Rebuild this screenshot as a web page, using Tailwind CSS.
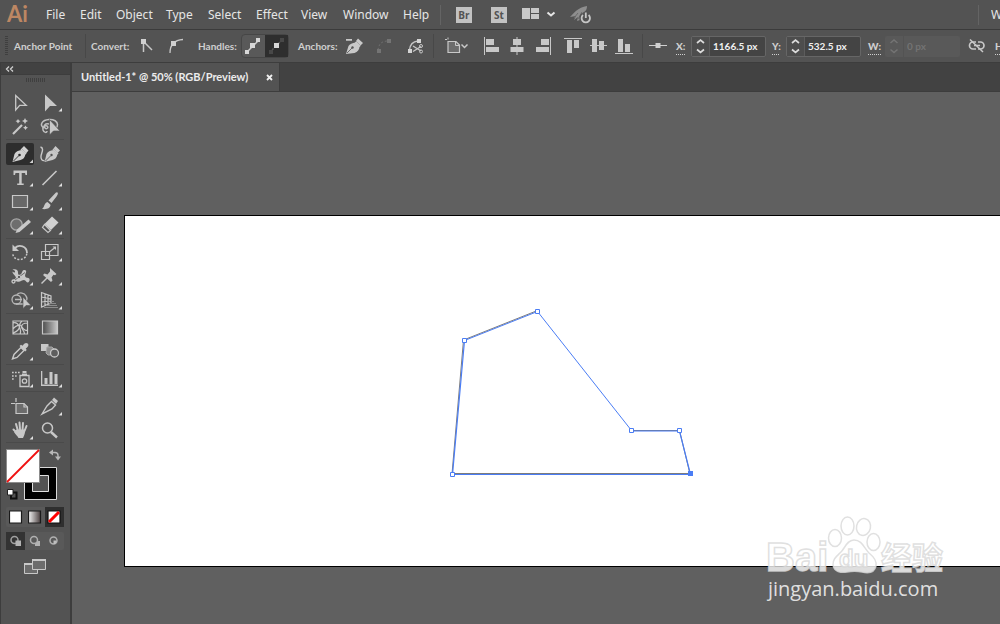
<!DOCTYPE html>
<html lang="en">
<head>
  <meta charset="UTF-8">
  <meta name="viewport" content="width=device-width, initial-scale=1.0">
  <title>Untitled-1* @ 50% (RGB/Preview)</title>
  <script src="https://cdn.jsdelivr.net/npm/@tailwindcss/browser@4"></script>
</head>
<body class="flex h-screen flex-col overflow-hidden bg-[#606060] font-['Open_Sans','Noto_Sans',sans-serif] text-[#dcdcdc]">

  <!-- Menu bar -->
  <header class="flex h-[30px] shrink-0 items-center overflow-hidden border-b border-[#3b3b3b] bg-[#535353] whitespace-nowrap">
    <h1 class="w-[46px] shrink-0 pb-0.5 pl-[7px] font-['Lato',sans-serif] text-[22px] leading-6 font-bold text-[#bd8763]">Ai</h1>
    <nav class="flex shrink-0 font-['Noto_Sans',sans-serif] text-xs text-[#e6e6e6]">
      <button class="w-[34px] text-left">File</button>
      <button class="w-9 text-left">Edit</button>
      <button class="w-[50px] text-left">Object</button>
      <button class="w-[42px] text-left">Type</button>
      <button class="w-12 text-left">Select</button>
      <button class="w-[45px] text-left">Effect</button>
      <button class="w-[42px] text-left">View</button>
      <button class="w-[60px] text-left">Window</button>
      <button class="w-[37px] text-left">Help</button>
    </nav>
    <div class="h-5 w-px shrink-0 bg-[#646464]"></div>
    <button class="ml-[15px] h-4 w-4 shrink-0 bg-[#c2c2c2] text-center text-[10px] leading-4 font-bold text-[#535353]">Br</button>
    <button class="ml-[19px] h-4 w-4 shrink-0 bg-[#c2c2c2] text-center text-[10px] leading-4 font-bold text-[#535353]">St</button>
    <button class="ml-[15px] shrink-0" aria-label="Arrange documents">
      <svg width="34" height="14" viewBox="0 0 34 14"><path d="M0 0h8v11H0zM9 0h8v5H9zM9 6h8v5H9z" fill="#c8c8c8"/><path d="M25.500 4.500l3.500 3 3.500-3" fill="none" stroke="#e6e6e6" stroke-width="2"/></svg>
    </button>
    <button class="ml-[14px] shrink-0" aria-label="GPU performance">
      <svg width="24" height="20" viewBox="0 0 24 20"><path d="M0 12C3 9 8 2 17 1c0 3-1 5-3 6-3 2-3 4-4 8l-3 1 1-4-4 3 2-4z" fill="#8e8e8e"/><path d="M8 8l-4 5M12 7l-4 7" stroke="#6a6a6a"/><path d="M13 9.500a4.500 4.500 0 1 0 5.500 0M15.800 7v6" fill="none" stroke="#535353" stroke-width="4"/><path d="M13 10a4.200 4.200 0 1 0 5.600 0M15.800 7.500v5.500" fill="none" stroke="#c6c6c6" stroke-width="1.800"/></svg>
    </button>
    <div class="ml-auto h-5 w-px shrink-0 bg-[#646464]"></div>
    <span class="ml-3 w-[9px] shrink-0 overflow-hidden font-['Noto_Sans',sans-serif] text-xs text-[#e6e6e6]">W</span>
  </header>

  <!-- Control bar -->
  <section class="flex h-8 shrink-0 items-center overflow-hidden bg-[#535353] font-['Lato',sans-serif] text-[10px] font-bold whitespace-nowrap text-[#cfcfcf]">
    <div class="ml-[5px] h-5 w-[3px] shrink-0 bg-[repeating-linear-gradient(#3f3f3f_0_1px,#535353_1px_2px)]"></div>
    <span class="ml-1.5 w-[71px] shrink-0">Anchor Point</span>
    <div class="h-6 w-px shrink-0 bg-[#484848]"></div>
    <span class="ml-[5px] w-[45px] shrink-0">Convert:</span>
    <button class="w-[22px] shrink-0" aria-label="Convert to corner">
      <svg width="22" height="20" viewBox="0 0 22 20" fill="none" stroke="#c8c8c8"><path d="M7.500 5v11M8 6l8 8" stroke-width="1.500"/><path d="M5 3h5v5H5z" fill="#d0d0d0" stroke="none"/></svg>
    </button>
    <button class="ml-2 w-[22px] shrink-0" aria-label="Convert to smooth">
      <svg width="22" height="20" viewBox="0 0 22 20" fill="none" stroke="#c8c8c8"><path d="M4 17C4 8 9 4 17 3.500" stroke-width="1.300"/><path d="M5 5h5v5H5z" fill="#d0d0d0" stroke="none"/></svg>
    </button>
    <span class="ml-2.5 w-[43px] shrink-0">Handles:</span>
    <div class="flex h-6 w-12 shrink-0 rounded-sm border border-[#464646] bg-[#595959]">
      <button class="w-[23px]" aria-label="Show handles">
        <svg width="23" height="22" viewBox="0 0 23 22"><path d="M5 17L17 5" stroke="#cfcfcf" stroke-width="1.500"/><path d="M3 15h4v4H3zM14 3h4v4h-4zM8 8h5v5H8z" fill="#d8d8d8"/></svg>
      </button>
      <button class="w-[23px] bg-[#2e2e2e]" aria-label="Hide handles">
        <svg width="23" height="22" viewBox="0 0 23 22"><path d="M5 17L17 5" stroke="#585858" stroke-width="1.500" stroke-dasharray="2 1"/><path d="M4 15h4v4H4zM15 3h4v4h-4z" fill="#484848"/><path d="M9 8h5v5H9z" fill="#d8d8d8"/></svg>
      </button>
    </div>
    <span class="ml-[9px] w-11 shrink-0">Anchors:</span>
    <button class="w-6 shrink-0" aria-label="Remove anchor">
      <svg width="24" height="20" viewBox="0 0 24 20"><path d="M4 18l2.500-8c1-2 4-3 7-3.500l4 4c0 3-2 5.500-5 6.500zM14 5l2-2.500 5 4.500-2.500 2.500zM4 3h6v1.700H4z" fill="#c8c8c8"/><path d="M13.500 6l4.500 4.500" stroke="#c8c8c8" stroke-width="2"/><path d="M5 17l5-5" stroke="#535353" stroke-width=".800"/><circle cx="10.500" cy="11.500" r="1.200" fill="#535353"/></svg>
    </button>
    <button class="ml-1.5 w-6 shrink-0" aria-label="Connect endpoints">
      <svg width="24" height="20" viewBox="0 0 24 20"><path d="M6 14C7 8 9 5.500 15 5" fill="none" stroke="#6e6e6e" stroke-dasharray="2 2"/><path d="M5 13h4v4H5zM15 3h4v4h-4z" fill="#747474"/></svg>
    </button>
    <button class="ml-[7px] w-6 shrink-0" aria-label="Cut path">
      <svg width="24" height="20" viewBox="0 0 24 20" fill="none" stroke="#c6c6c6"><path d="M6.500 14C7 8 10 5.500 15 5" stroke-width="1.300"/><path d="M5 13h4v4H5zM14 3h4v4h-4z" fill="#d4d4d4" stroke="none"/><path d="M10 10l8 5M10 15.500l8-5" stroke-width="1.400"/><circle cx="18" cy="10" r="1.500"/><circle cx="18" cy="15.500" r="1.500"/></svg>
    </button>
    <div class="ml-1.5 h-6 w-px shrink-0 bg-[#484848]"></div>
    <button class="ml-[9px] w-7 shrink-0" aria-label="Align to">
      <svg width="28" height="20" viewBox="0 0 28 20" fill="none"><path d="M5 5.500h8l3.500 3.500v7.500H5z" fill="#6c6c6c" stroke="#c8c8c8" stroke-width="1.200"/><path d="M12.500 5v4.500H17" stroke="#c8c8c8"/><path d="M2 3.500h2M5 1.500v2" stroke="#c8c8c8"/><path d="M18.500 8.500l3 3 3-3" stroke="#c8c8c8" stroke-width="1.500"/></svg>
    </button>
    <button class="ml-2 w-[26px] shrink-0" aria-label="Align left">
      <svg width="26" height="20" viewBox="0 0 26 20" fill="#c8c8c8"><path d="M5 1h1v18H5zM7 3h8v6H7zM7 11h13v5H7z"/></svg>
    </button>
    <button class="w-[26px] shrink-0" aria-label="Align center">
      <svg width="26" height="20" viewBox="0 0 26 20" fill="#c8c8c8"><path d="M11.500 1h1v18h-1zM8 3h8v6H8zM5.500 11h13v5h-13z"/></svg>
    </button>
    <button class="w-[26px] shrink-0" aria-label="Align right">
      <svg width="26" height="20" viewBox="0 0 26 20" fill="#c8c8c8"><path d="M19 1h1v18h-1zM10 3h8v6h-8zM5 11h13v5H5z"/></svg>
    </button>
    <button class="ml-[3px] w-[26px] shrink-0" aria-label="Align top">
      <svg width="26" height="20" viewBox="0 0 26 20" fill="#c8c8c8"><path d="M4 2h18v1H4zM7 4h5v13H7zM14 4h5v8h-5z"/></svg>
    </button>
    <button class="w-[26px] shrink-0" aria-label="Align middle">
      <svg width="26" height="20" viewBox="0 0 26 20" fill="#c8c8c8"><path d="M4 9h17v1H4zM6 3h5v13H6zM13 5h5v9h-5z"/></svg>
    </button>
    <button class="w-[26px] shrink-0" aria-label="Align bottom">
      <svg width="26" height="20" viewBox="0 0 26 20" fill="#c8c8c8"><path d="M3 17h18v1H3zM6 3h5v13H6zM13 8h5v8h-5z"/></svg>
    </button>
    <div class="ml-1 h-6 w-px shrink-0 bg-[#484848]"></div>
    <button class="ml-[3px] w-6 shrink-0" aria-label="Reference point">
      <svg width="24" height="20" viewBox="0 0 24 20"><path d="M3 9h18v1H3zM9.500 7h5v5h-5z" fill="#d0d0d0"/></svg>
    </button>
    <label for="x" class="ml-1.5 w-[15px] shrink-0 font-black underline decoration-dotted underline-offset-4">X:</label>
    <div class="flex h-[21px] w-[75px] shrink-0 rounded-xs border border-[#666] bg-[#444]">
      <button class="w-[17px] bg-[#4d4d4d]" aria-label="Step X">
        <svg width="17" height="19" viewBox="0 0 17 19" fill="none" stroke="#dcdcdc" stroke-width="1.700"><path d="M5 6l3.500-3 3.500 3M5 12.500l3.500 3 3.500-3"/></svg>
      </button>
      <input id="x" value="1166.5 px" class="w-14 min-w-0 border-l border-[#5c5c5c] pl-[3px] text-[#f0f0f0]">
    </div>
    <label for="y" class="ml-1.5 w-[14px] shrink-0 font-black underline decoration-dotted underline-offset-4">Y:</label>
    <div class="flex h-[21px] w-[75px] shrink-0 rounded-xs border border-[#666] bg-[#444]">
      <button class="w-[17px] bg-[#4d4d4d]" aria-label="Step Y">
        <svg width="17" height="19" viewBox="0 0 17 19" fill="none" stroke="#dcdcdc" stroke-width="1.700"><path d="M5 6l3.500-3 3.500 3M5 12.500l3.500 3 3.500-3"/></svg>
      </button>
      <input id="y" value="532.5 px" class="w-14 min-w-0 border-l border-[#5c5c5c] pl-[3px] text-[#f0f0f0]">
    </div>
    <label for="w" class="ml-[7px] w-[17px] shrink-0 font-black underline decoration-dotted underline-offset-4">W:</label>
    <div class="flex h-[21px] w-[75px] shrink-0 rounded-xs bg-[#595959]">
      <button class="w-[18px]" aria-label="Step W" disabled>
        <svg width="18" height="19" viewBox="0 0 18 19" fill="none" stroke="#747474" stroke-width="1.500"><path d="M5.500 6l3.500-3 3.500 3M5.500 12.500l3.500 3 3.500-3"/></svg>
      </button>
      <input id="w" value="0 px" disabled class="w-14 min-w-0 border-l border-[#535353] pl-[3px] text-[#737373]">
    </div>
    <button class="ml-1.5 w-6 shrink-0" aria-label="Constrain proportions">
      <svg width="24" height="20" viewBox="0 0 24 20" fill="none" stroke="#c8c8c8" stroke-width="1.700"><path d="M10 6H7a3 3 0 0 0 0 7h3M12 6h2.500a3 3 0 0 1 0 7H12M8 9.500h6"/><path d="M4 3.500l13 12.500" stroke-width="1.500"/></svg>
    </button>
    <span class="ml-[5px] shrink-0 font-black underline decoration-dotted underline-offset-4">H:</span>
  </section>

  <div class="flex min-h-0 flex-1">
    <!-- Tools panel -->
    <aside class="flex w-[72px] shrink-0 flex-col border-t border-r-2 border-l border-[#3d3d3d] bg-[#535353]">
      <button class="h-3 border-b border-[#3d3d3d] bg-[#424242] pl-1" aria-label="Collapse panel">
        <svg width="10" height="8" viewBox="0 0 10 8" fill="none" stroke="#cfcfcf" stroke-width="1.300"><path d="M4 1.500L1.500 4 4 6.500M8 1.500L5.500 4 8 6.500"/></svg>
      </button>
      <div class="mx-auto mt-[3px] mb-[9px] h-1 w-5 bg-[repeating-linear-gradient(90deg,#3f3f3f_0_1px,#535353_1px_2px)]"></div>

      <div class="ml-[5px] grid w-[58px] grid-cols-2 gap-x-0.5 gap-y-0.5 border-b border-[#4a4a4a] pt-px pb-px">
        <button class="h-[22px]" aria-label="Selection">
          <svg width="28" height="22" viewBox="0 0 28 22"><path d="M9.700 3.500v14.500l4-4.700h6.500z" fill="none" stroke="#c8c8c8" stroke-width="1.300"/></svg>
        </button>
        <button class="h-[22px]" aria-label="Direct selection">
          <svg width="28" height="22" viewBox="0 0 28 22" fill="#c8c8c8"><path d="M9 2.500v17l5-5.500h7z"/><path d="M26 16v3.500h-3.500z" fill="#e0e0e0"/></svg>
        </button>
        <button class="h-[22px]" aria-label="Magic wand">
          <svg width="28" height="22" viewBox="0 0 28 22" fill="none" stroke="#c8c8c8"><path d="M7 18l9-9" stroke-width="2.200"/><path d="M12 3l1 1.500L14.500 5 13 6l-1 1.500L11 6 9.500 5 11 4.500zM19 2l1 2 2 1-2 1-1 2-1-2-2-1 2-1zM19.500 9.500l1 1.500 1.500.500-1.500 1-1 1.500-1-1.500-1.500-1 1.500-.500z" fill="#c8c8c8" stroke="none"/></svg>
        </button>
        <button class="h-[22px]" aria-label="Lasso">
          <svg width="28" height="22" viewBox="0 0 28 22" fill="none" stroke="#c0c0c0" stroke-width="1.500"><path d="M8 12c-5-3-2-8 5-8.500 5-.300 8.500 2 8.500 5 0 2-.500 3-1.500 3.500"/><path d="M13 8c-4-1-6 2-4 4s4-1 2-2-5 1-4 4 4 3 4 1"/><path d="M13.500 3.500v15.500l4-4h6.500z" fill="#c8c8c8" stroke="#535353" stroke-width=".700"/></svg>
        </button>
      </div>

      <div class="mt-0.5 ml-[5px] grid w-[58px] grid-cols-2 gap-x-0.5 gap-y-0.5 border-b border-[#4a4a4a] pt-px pb-px">
        <button class="h-[22px] rounded-xs bg-[#2d2d2d]" aria-label="Pen" aria-pressed="true">
          <svg width="28" height="22" viewBox="0 0 28 22" fill="#d0d0d0"><path d="M6.500 19l2-8c1-2.500 4-3.300 7-4l4 4c-.500 3.500-2.500 5.500-5 6zM15.500 5.500L18 3l4.500 4.500-2.500 3z"/><path d="M15 6l5 5" stroke="#d0d0d0" stroke-width="1.500"/><path d="M7.500 18l5-5" stroke="#2d2d2d" stroke-width=".900"/><circle cx="13.500" cy="12" r="1.300" fill="#2d2d2d"/><path d="M27 16.500V20h-3.500z"/></svg>
        </button>
        <button class="h-[22px]" aria-label="Curvature">
          <svg width="28" height="22" viewBox="0 0 28 22" fill="#c8c8c8"><path d="M8.500 19l2-8c1-2.500 4-3.300 7-4l4 4c-.500 3.500-2.500 5.500-5 6zM17.500 5.500L19.500 3 24 7.500 21.500 10z"/><path d="M17 6l5 5" stroke="#c8c8c8" stroke-width="1.500"/><path d="M9.500 18l5-5" stroke="#535353" stroke-width=".900"/><circle cx="15.500" cy="12" r="1.200" fill="#535353"/><path d="M4.500 4c4 1 1 6 .500 9-.300 3 1 5 3.500 4.500" fill="none" stroke="#c8c8c8" stroke-width="1.400"/></svg>
        </button>
        <button class="h-[22px]" aria-label="Type">
          <svg width="28" height="22" viewBox="0 0 28 22" fill="#c8c8c8"><path d="M7.500 3.500h13.500v4.500h-1.500l-.500-2h-3.300v10.500h2V18h-6.500v-1.500h2V6H9.500L9 8H7.500z"/><path d="M27 16v3.500h-3.500z" fill="#e0e0e0"/></svg>
        </button>
        <button class="h-[22px]" aria-label="Line segment">
          <svg width="28" height="22" viewBox="0 0 28 22"><path d="M6.500 18L20.500 4" stroke="#c8c8c8" stroke-width="1.600"/><path d="M26 16v3.500h-3.500z" fill="#e0e0e0"/></svg>
        </button>
        <button class="h-[22px]" aria-label="Rectangle">
          <svg width="28" height="22" viewBox="0 0 28 22"><path d="M6.500 4.500h15v12h-15z" fill="#686868" stroke="#c8c8c8" stroke-width="1.200"/><path d="M27 16v3.500h-3.500z" fill="#e0e0e0"/></svg>
        </button>
        <button class="h-[22px]" aria-label="Paintbrush">
          <svg width="28" height="22" viewBox="0 0 28 22" fill="#c8c8c8"><path d="M21.500 1.500c1 1 0 2-1 4L15.500 12l-3-2.500 6-6.500c1-1 2-2.300 3-1.500zM11.500 11l3 2.700c0 3-3 5-8.500 4.300 2.500-1.500 2-6 5.500-7z"/><path d="M26 16v3.500h-3.500z" fill="#e0e0e0"/></svg>
        </button>
        <button class="h-[22px]" aria-label="Shaper">
          <svg width="28" height="22" viewBox="0 0 28 22"><circle cx="10.500" cy="9.500" r="5.700" fill="#6e6e6e" stroke="#a8a8a8" stroke-width="1.300"/><path d="M11 14.500L22.500 4.500l2.500 2.500-11.500 10-4 1z" fill="#c8c8c8"/><path d="M27 16v3.500h-3.500z" fill="#e0e0e0"/></svg>
        </button>
        <button class="h-[22px]" aria-label="Eraser">
          <svg width="28" height="22" viewBox="0 0 28 22"><path d="M16 1.500l6.500 6-7.500 7.500-6.500-6z" fill="#d0d0d0"/><path d="M8.500 9.500l6 6-2.500 2-5.500-5z" fill="none" stroke="#c8c8c8" stroke-width="1.200"/><path d="M26 16v3.500h-3.500z" fill="#e0e0e0"/></svg>
        </button>
      </div>

      <div class="mt-0.5 ml-[5px] grid w-[58px] grid-cols-2 gap-x-0.5 gap-y-0.5 border-b border-[#4a4a4a] pt-px pb-px">
        <button class="h-[22px]" aria-label="Rotate">
          <svg width="28" height="22" viewBox="0 0 28 22" fill="none" stroke="#c8c8c8"><path d="M9 6C13 2 21 4 21 11" stroke-width="1.800"/><path d="M6.500 2.500v6.500h6.500z" fill="#c8c8c8" stroke="none"/><path d="M20.800 11.500c-1 8-13 8-14 .500" stroke-width="1.500" stroke-dasharray="2 1.500"/><path d="M27 16v3.500h-3.500z" fill="#e0e0e0" stroke="none"/></svg>
        </button>
        <button class="h-[22px]" aria-label="Scale">
          <svg width="28" height="22" viewBox="0 0 28 22" fill="none" stroke="#c8c8c8" stroke-width="1.200"><path d="M9.500 2.500h12.500v11h-12.500zM5.500 9.500h8v8h-8zM14 9.500l5-4"/><path d="M16.500 4.500H20V8z" fill="#c8c8c8" stroke="none"/><path d="M26 16v3.500h-3.500z" fill="#e0e0e0" stroke="none"/></svg>
        </button>
        <button class="h-[22px]" aria-label="Width">
          <svg width="28" height="22" viewBox="0 0 28 22" fill="#c8c8c8"><path d="M6.500 3.500c3-1 6 0 5.500 3.500 0 2 1.500 2.500 3 1s1-4 3.500-4c1.500 0 2 1 1.500 2.500-1 2-1.500 4 0 5 1.500.800 3 0 3.500 1.500s-.500 3.500-2 3.500-1.500-2.500-3.500-2.500-4 2.500-7 1.500c-2-.600-2-1-3.500 0v-1.500c2-1.500 3-2 2-3.500S6 7 6.500 5.500c1 1 2 1.500 2.500.500s-1-2-2.500-2.500z"/><path d="M7 15.500l12-9" stroke="#535353" stroke-width=".800"/><circle cx="13" cy="11" r="1.600" fill="#535353" stroke="#c8c8c8"/><circle cx="7.500" cy="15.500" r="1.500" fill="#535353" stroke="#c8c8c8" stroke-width="1.300"/><path d="M27 16v3.500h-3.500z" fill="#e0e0e0"/></svg>
        </button>
        <button class="h-[22px]" aria-label="Puppet warp">
          <svg width="28" height="22" viewBox="0 0 28 22" fill="#c8c8c8"><path d="M14 2l6.500 6-1.500 1.200-1.500-.400-2 2.700 1 3-1.500 1.500-8-7L8.500 7.500l3 1L14 5.500V3.500z"/><path d="M12 11l-6.500 6.500" stroke="#c8c8c8" stroke-width="1.500"/><path d="M26 16v3.500h-3.500z" fill="#e0e0e0"/></svg>
        </button>
        <button class="h-[22px]" aria-label="Shape builder">
          <svg width="28" height="22" viewBox="0 0 28 22" fill="none" stroke="#b8b8b8" stroke-width="1.300"><path d="M11 4.500a5.500 5 0 0 1 9 1.500c1.500 2 1 4 0 5.500"/><circle cx="10.500" cy="9.500" r="4.500"/><path d="M9 9.500h7M17 14h-7"/><path d="M17 7v11.500l3-3h5z" fill="#c8c8c8" stroke="#535353" stroke-width=".600"/><path d="M27 16v3.500h-3.500z" fill="#e0e0e0" stroke="none"/></svg>
        </button>
        <button class="h-[22px]" aria-label="Perspective grid">
          <svg width="28" height="22" viewBox="0 0 28 22" fill="none" stroke="#c8c8c8" stroke-width="1.200"><path d="M5.500 2.500v14.500l9.500-4V6zM9 4v11.500M12 5v9M5.500 7l9.500 2M5.500 12l9.500-1"/><path d="M15 11.500h3M13 13.500h7M10 15.500h11M8 17.500h14" stroke="#8c8c8c"/><path d="M26 16v3.500h-3.500z" fill="#e0e0e0" stroke="none"/></svg>
        </button>
      </div>

      <div class="mt-0.5 ml-[5px] grid w-[58px] grid-cols-2 gap-x-0.5 gap-y-0.5 border-b border-[#4a4a4a] pt-px pb-px">
        <button class="h-[22px]" aria-label="Mesh">
          <svg width="28" height="22" viewBox="0 0 28 22" fill="none" stroke="#c8c8c8" stroke-width="1.200"><path d="M7 4h14.500v13H7zM7 12c3-4 7-5 9-2s4 4 5.500 3M7 6c3-1 5 1 6 3s2 6 1 8M16 4c-4 3-1 6-4 9s-5 2-5 4M21.500 6c-4 0-6 2-6 4s3 4 3 7"/></svg>
        </button>
        <button class="h-[22px]" aria-label="Gradient">
          <svg width="28" height="22" viewBox="0 0 28 22"><defs><linearGradient id="g1"><stop stop-color="#4c4c4c"/><stop offset="1" stop-color="#c8c8c8"/></linearGradient></defs><path d="M6.500 4h15v13h-15z" fill="url(#g1)" stroke="#c8c8c8" stroke-width="1.200"/></svg>
        </button>
        <button class="h-[22px]" aria-label="Eyedropper">
          <svg width="28" height="22" viewBox="0 0 28 22"><path d="M15 6.500l3 3-7 7-4.500 1.500 1.500-4.500z" fill="none" stroke="#c8c8c8" stroke-width="1.400"/><path d="M13.500 5l1.500-1.200 1.500 1C18 2.500 20 1 21.700 2.500s0 4-2 5l1 1.500-1.500 1.500z" fill="#c8c8c8"/><path d="M27 16v3.500h-3.500z" fill="#e0e0e0"/></svg>
        </button>
        <button class="h-[22px]" aria-label="Blend">
          <svg width="28" height="22" viewBox="0 0 28 22"><path d="M5 3h7.500v7H5z" fill="#c8c8c8"/><path d="M11 6h5l2 2v4l-2 2h-4l-2-2z" fill="#8e8e8e" stroke="#a8a8a8"/><circle cx="18.500" cy="12" r="4" fill="#5e5e5e" stroke="#c8c8c8" stroke-width="1.300"/></svg>
        </button>
      </div>

      <div class="mt-0.5 ml-[5px] grid w-[58px] grid-cols-2 gap-x-0.5 gap-y-0.5 border-b border-[#4a4a4a] pt-px pb-px">
        <button class="h-[22px]" aria-label="Symbol sprayer">
          <svg width="28" height="22" viewBox="0 0 28 22" fill="none" stroke="#c8c8c8" stroke-width="1.300"><path d="M14 7.500h9v11h-9z"/><path d="M16 6.500h5M16.500 4h4" stroke-width="2"/><circle cx="18.500" cy="13" r="2.200"/><path d="M6 4.500h8M6 8h5M6 11h2" stroke-width="1.700" stroke-dasharray="1.700 1.300"/><path d="M27 16v3.500h-3.500z" fill="#e0e0e0" stroke="none"/></svg>
        </button>
        <button class="h-[22px]" aria-label="Column graph">
          <svg width="28" height="22" viewBox="0 0 28 22" fill="#c8c8c8"><path d="M5 3h1.300v13.500H22V18H5zM8.500 10h3v6h-3zM13.500 4h3v12h-3zM18.500 6h3v10h-3z"/><path d="M26 16v3.500h-3.500z" fill="#e0e0e0"/></svg>
        </button>
      </div>

      <div class="mt-0.5 ml-[5px] grid w-[58px] grid-cols-2 gap-x-0.5 gap-y-0.5 border-b border-[#4a4a4a] pt-px pb-px">
        <button class="h-[22px]" aria-label="Artboard">
          <svg width="28" height="22" viewBox="0 0 28 22" fill="none" stroke="#c8c8c8" stroke-width="1.200"><path d="M10 8.500h8l3.500 3.500v6.500H10z" fill="#6c6c6c"/><path d="M18 8.500V12h3.500M5 8.500h4M10 3v4"/></svg>
        </button>
        <button class="h-[22px]" aria-label="Slice">
          <svg width="28" height="22" viewBox="0 0 28 22"><path d="M6 19l5-8 4.500-4.500 4 3.500L16 14z" fill="none" stroke="#c8c8c8" stroke-width="1.400"/><path d="M16 5l2-2.500 4 3.500-2 3z" fill="#c8c8c8"/><path d="M26 17v3.500h-3.500z" fill="#e0e0e0"/></svg>
        </button>
        <button class="h-[22px]" aria-label="Hand">
          <svg width="28" height="22" viewBox="0 0 28 22" fill="none" stroke="#c8c8c8" stroke-linecap="round" stroke-width="2"><path d="M10 5l2 7M13.500 3.500l.500 7M17 4l-.500 7M20.500 7L18.500 12M7.500 10.500l4 4"/><path d="M10.500 10.500h8.500c.500 4-1 6-2 8.500h-4.500c-1-2-3-3.500-4.500-6z" fill="#c8c8c8" stroke="none"/><path d="M27 17v3.500h-3.500z" fill="#e0e0e0" stroke="none"/></svg>
        </button>
        <button class="h-[22px]" aria-label="Zoom">
          <svg width="28" height="22" viewBox="0 0 28 22" fill="none" stroke="#c8c8c8"><circle cx="11.500" cy="9" r="5" stroke-width="1.500"/><path d="M15 13l6 5.500" stroke-width="2.400"/></svg>
        </button>
      </div>

      <!-- Fill and stroke -->
      <button class="mt-[5px] ml-[5px] w-[58px]" aria-label="Fill and stroke">
        <svg width="58" height="54" viewBox="0 0 58 54">
          <path d="M18.500 19.500h32v32h-32z" fill="#000" stroke="#d8d8d8"/>
          <path d="M26.500 27.500h16v16h-16z" fill="#535353" stroke="#e0e0e0"/>
          <path d="M.500 1.500h33v33H.500z" fill="#fff" stroke="#8c8c8c"/>
          <path d="M1 34L33 2" stroke="#f01010" stroke-width="1.800"/>
          <path d="M46 4.500h3a3 3 0 0 1 3 3V9" fill="none" stroke="#b8b8b8" stroke-width="1.400"/><path d="M47 1.500v6l-4-3zM49 8.500h6l-3 4z" fill="#b8b8b8"/>
          <path d="M5 44.500h5.500v6H5z" fill="none" stroke="#111" stroke-width="2"/><path d="M1.500 41.500h5.500v5.500H1.500z" fill="#fff" stroke="#222"/>
        </svg>
      </button>
      <div class="mt-[5px] ml-[5px] flex h-5 w-[58px] rounded-xs bg-[#595959]">
        <button class="flex-1" aria-label="Color"><svg class="mx-auto" width="14" height="14" viewBox="0 0 14 14"><path d="M.500 1h12v12h-12z" fill="#fff" stroke="#1a1a1a" stroke-width="1.200"/></svg></button>
        <button class="flex-1" aria-label="Gradient fill"><svg class="mx-auto" width="14" height="14" viewBox="0 0 14 14"><defs><linearGradient id="g2"><stop stop-color="#f2f2f2"/><stop offset="1" stop-color="#4a4040"/></linearGradient></defs><path d="M.500 1h12v12h-12z" fill="url(#g2)" stroke="#1a1a1a" stroke-width="1.200"/></svg></button>
        <button class="flex-1 bg-[#2f2f2f]" aria-label="None" aria-pressed="true"><svg class="mx-auto" width="14" height="14" viewBox="0 0 14 14"><path d="M1 1h12v12H1z" fill="#fff" stroke="#111" stroke-width="1.200"/><path d="M2 12L12 2" stroke="#f00" stroke-width="3"/></svg></button>
      </div>
      <div class="mt-[5px] ml-[5px] flex h-[18px] w-[58px] rounded-xs bg-[#595959]">
        <button class="flex-1 bg-[#333]" aria-label="Draw normal" aria-pressed="true"><svg class="mx-auto" width="14" height="14" viewBox="0 0 14 14"><circle cx="5.500" cy="6" r="3.500" fill="none" stroke="#a0a0a0" stroke-width="1.500"/><path d="M6.500 6.500H12V12H6.500z" fill="#b4b4b4"/></svg></button>
        <button class="flex-1" aria-label="Draw behind"><svg class="mx-auto" width="14" height="14" viewBox="0 0 14 14"><path d="M7 7h5v5H7z" fill="#b4b4b4"/><circle cx="6" cy="6" r="3.500" fill="#595959" stroke="#b0b0b0" stroke-width="1.500"/></svg></button>
        <button class="flex-1" aria-label="Draw inside"><svg class="mx-auto" width="14" height="14" viewBox="0 0 14 14"><circle cx="6.500" cy="6.500" r="3.500" fill="none" stroke="#b0b0b0" stroke-width="1.500"/><path d="M6.500 6.500h3v1.500L8 10H6.500z" fill="#c0c0c0"/></svg></button>
      </div>
      <button class="mx-auto mt-2" aria-label="Screen mode">
        <svg width="24" height="17" viewBox="0 0 24 17" fill="#6c6c6c" stroke="#c8c8c8"><path d="M.500 5.500h13v10h-13z"/><path d="M0 6h14" stroke-width="2"/><path d="M8.500 1.500h13v10h-13z"/><path d="M8 2h14" stroke-width="2"/></svg>
      </button>
    </aside>

    <main class="flex min-w-0 flex-1 flex-col">
      <!-- Document tabs -->
      <div class="flex h-[30px] shrink-0 border-t border-b border-[#3d3d3d] bg-[#424242]">
        <div class="flex w-[208px] items-center justify-between border-r border-[#3d3d3d] bg-[#535353] pr-1.5 pl-[9px] font-['Lato',sans-serif] text-[11px] font-bold whitespace-nowrap text-[#ececec]">
          <span>Untitled-1* @ 50% (RGB/Preview)</span>
          <button class="shrink-0" aria-label="Close"><svg width="7" height="7" viewBox="0 0 7 7"><path d="M1 1l5 5M6 1L1 6" stroke="#f0f0f0" stroke-width="1.800"/></svg></button>
        </div>
      </div>

      <!-- Canvas -->
      <div class="relative flex flex-1 bg-[#606060] pt-[123px] pb-[57px] pl-[52px]">
        <div class="relative flex-1 border border-r-0 border-black bg-white">
          <svg class="absolute top-[89px] left-[323px]" width="250" height="175" viewBox="448 305 250 175">
            <path d="M452 474L463.500 340L537.500 310.500M631.500 430.500H679.500L690 474M452.500 473.500H690" fill="none" stroke="#7c7c7c"/>
            <path d="M464.500 340.500L537.500 311.500" fill="none" stroke="#4a7df5"/>
            <path d="M537.500 311.500L631.500 430.500" fill="none" stroke="#4a7df5"/>
            <path d="M631.500 431H679.500L690.500 474.500H452.500L464.500 340.500" fill="none" stroke="#4a7df5" stroke-width="1.200"/>
            <path d="M462.500 338.500h4v4h-4zM535.500 309.500h4v4h-4zM629.500 428.500h4v4h-4zM677.500 428.500h4v4h-4zM450.500 472.500h4v4h-4z" fill="#fff" stroke="#4a7df5"/>
            <path d="M688 471h5v5h-5z" fill="#4a7df5"/>
          </svg>
        </div>

        <!-- Watermark -->
        <svg class="absolute right-[50px] bottom-[18px]" width="190" height="94" viewBox="760 512 190 94" fill="#fff" fill-opacity=".8" stroke="#d8d8d8" stroke-width="1.500" stroke-opacity=".8">
          <text x="766" y="571" font-family="Liberation Sans, sans-serif" font-weight="700" font-size="40">Bai</text>
          <g>
            <ellipse cx="835" cy="538" rx="6.500" ry="8.500"/>
            <ellipse cx="847.500" cy="526" rx="6.500" ry="9"/>
            <ellipse cx="863.500" cy="527" rx="7" ry="8.500" transform="rotate(12 863.500 527)"/>
            <ellipse cx="873.500" cy="542" rx="6.500" ry="8.500"/>
            <path d="M854 540c8 0 10 8 15 13 5 4 8 8 7 13-2 8-10 7-14 6-5-1-10-1-15 0-6 1-13 0-14-7-.500-6 4-9 8-13s6-12 13-12z"/>
          </g>
          <text x="839" y="567" font-family="Liberation Sans, sans-serif" font-weight="700" font-size="24">du</text>
          <text x="881" y="569" font-family="Noto Sans CJK SC, sans-serif" font-weight="700" font-size="31">经验</text>
          <text x="768" y="596" font-family="Open Sans, sans-serif" font-size="20" font-weight="500" fill="#f0f0f0" fill-opacity=".9" stroke="none">jingyan.baidu.com</text>
        </svg>
      </div>
    </main>
  </div>
</body>
</html>
